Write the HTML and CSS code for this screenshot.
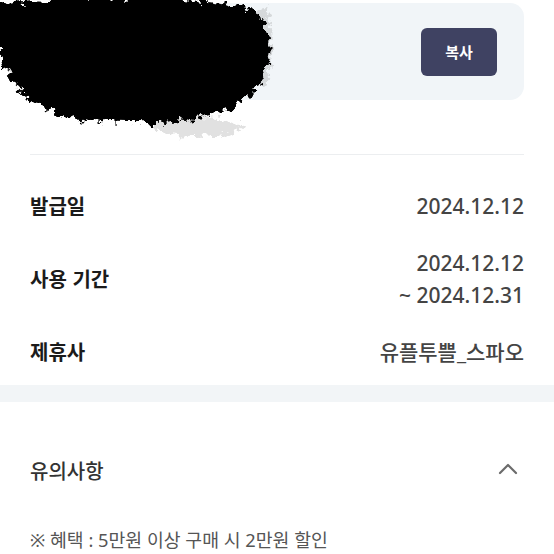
FILE: index.html
```html
<!DOCTYPE html>
<html lang="ko">
<head>
    <meta charset="UTF-8">
    <meta name="viewport" content="width=device-width, initial-scale=1.0">
    <title>쿠폰 상세</title>
    <link rel="stylesheet" href="styles.css">
</head>
<body>
    <div class="page">
        <!-- 쿠폰 번호 카드 -->
        <div class="coupon">
            <span class="coupon-code">1234-5678-9012</span>
            <button class="copy-btn">복사</button>
        </div>

        <!-- 가려진 부분 -->
        <svg class="scribble" width="300" height="145" viewBox="0 0 300 145">
            <defs>
                <filter id="rough" x="-20%" y="-20%" width="140%" height="140%">
                    <feTurbulence type="fractalNoise" baseFrequency="0.14" numOctaves="4" seed="3" result="noise"/>
                    <feDisplacementMap in="SourceGraphic" in2="noise" scale="16" xChannelSelector="R" yChannelSelector="G"/>
                </filter>
            </defs>
            <g filter="url(#rough)">
                <ellipse cx="205" cy="130" rx="45" ry="9" fill="#aaa" opacity="0.35"/>
                <ellipse cx="270" cy="50" rx="10" ry="40" fill="#999" opacity="0.3"/>
                <path d="M4 8 C 40 -2, 210 -4, 262 14 C 286 30, 282 84, 252 104 C 226 124, 170 130, 100 124 C 40 118, -4 80, 4 8 Z" fill="#000"/>
            </g>
        </svg>

        <div class="divider"></div>

        <div class="info">
            <div class="info-row">
                <span class="label">발급일</span>
                <span class="value">2024.12.12</span>
            </div>
            <div class="info-row">
                <span class="label">사용 기간</span>
                <span class="value">2024.12.12<br>~ 2024.12.31</span>
            </div>
            <div class="info-row">
                <span class="label">제휴사</span>
                <span class="value">유플투쁠_스파오</span>
            </div>
        </div>

        <div class="band"></div>

        <!-- 유의사항 -->
        <div class="notice">
            <div class="notice-head">
                <span class="notice-title">유의사항</span>
                <svg class="chevron" width="20" height="12" viewBox="0 0 20 12">
                    <path d="M2 10 L10 2 L18 10" fill="none" stroke="#6b6b6b" stroke-width="2.2" stroke-linecap="round" stroke-linejoin="round"/>
                </svg>
            </div>
            <p class="notice-text">※ 혜택 : 5만원 이상 구매 시 2만원 할인</p>
        </div>
    </div>
</body>
</html>
```

FILE: styles.css
```css
body {
    margin: 0;
    background-color: #fff;
    font-family: "Noto Sans", "Noto Sans CJK KR", sans-serif;
}

.page {
    position: relative;
    width: 554px;
}

.coupon {
    margin: 3px 30px 0;
    height: 97px;
    padding: 0 27px 0 20px;
    background-color: #f1f5f8;
    border-radius: 14px;
    display: flex;
    align-items: center;
    justify-content: space-between;
}

.coupon-code {
    font-size: 18px;
    color: #222;
}

.copy-btn {
    width: 76px;
    height: 48px;
    border: none;
    border-radius: 6px;
    background-color: #3f4262;
    color: #fff;
    font-family: "Noto Sans CJK KR", sans-serif;
    font-size: 15px;
    font-weight: 700;
}

.scribble {
    position: absolute;
    top: -6px;
    left: -8px;
}

.divider {
    height: 1px;
    margin: 54px 30px 0;
    background-color: #eceef0;
}

.info {
    padding: 35px 30px 17px;
    display: flex;
    flex-direction: column;
    gap: 25px;
}

.info-row {
    display: flex;
    justify-content: space-between;
    align-items: center;
    line-height: 32px;
    font-size: 20px;
}

.label {
    font-family: "Noto Sans CJK KR", sans-serif;
    font-weight: 600;
    color: #1b1b1b;
}

.value {
    text-align: right;
    font-size: 21px;
    color: #444;
    font-weight: 500;
}

.band {
    height: 17px;
    background-color: #f2f5f7;
}

.notice {
    padding: 53px 30px 0;
}

.notice-head {
    display: flex;
    justify-content: space-between;
    align-items: center;
    line-height: 32px;
}

.notice-title {
    font-family: "Noto Sans CJK KR", sans-serif;
    font-size: 20px;
    font-weight: 500;
    color: #333;
}

.chevron {
    margin-right: 6px;
    margin-top: -4px;
}

.notice-text {
    margin: 40px 0 0;
    font-size: 18.3px;
    line-height: 26px;
    color: #555;
}
```
